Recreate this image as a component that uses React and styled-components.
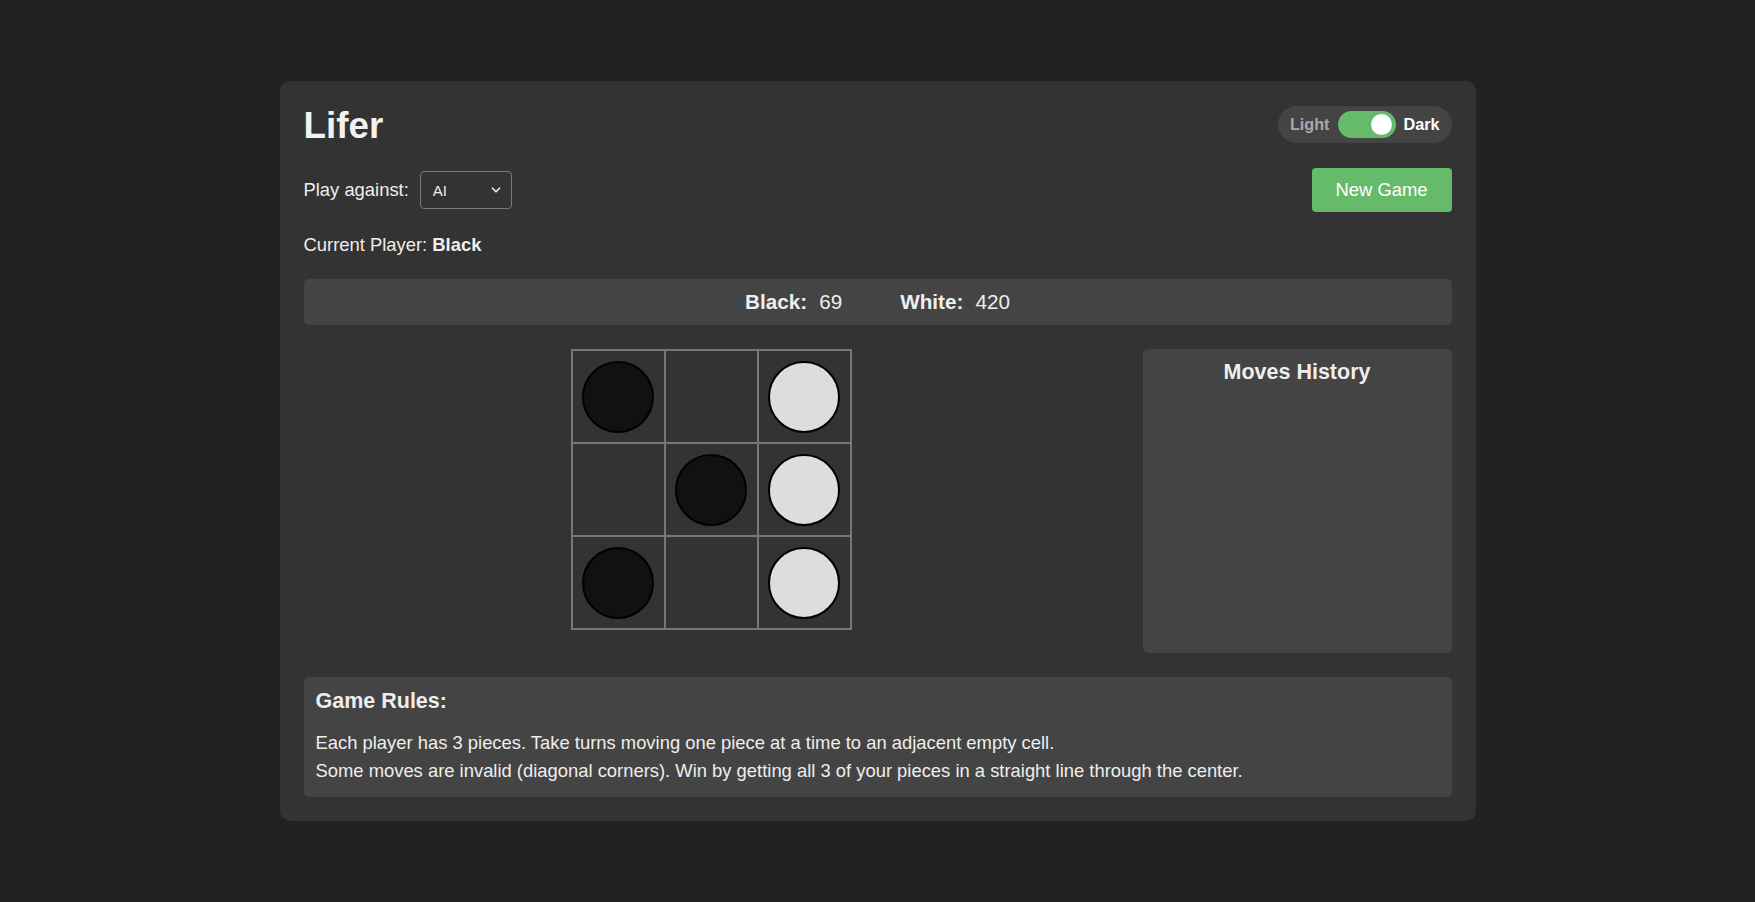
import styled, { createGlobalStyle } from 'styled-components';
import { ChevronDown } from 'lucide-react';

const GlobalStyle = createGlobalStyle`
  body {
    margin: 0;
    background: #222222;
    color: #eeeeee;
    font-family: "Liberation Sans", Arial, sans-serif;
    font-size: 18.4px;
  }
`;

const Page = styled.div`
  display: flex;
  justify-content: center;
  align-items: flex-start;
  padding-top: 81px;
  min-height: 100vh;
  box-sizing: border-box;
`;

const Card = styled.main`
  width: 1196px;
  box-sizing: border-box;
  padding: 24px;
  background: #333333;
  border-radius: 10px;
  display: flex;
  flex-direction: column;
`;

const Header = styled.header`
  display: flex;
  justify-content: space-between;
  align-items: center;
`;

const Title = styled.h1`
  margin: 0;
  font-size: 36.8px;
  line-height: 41px;
  font-weight: bold;
  color: #f2f2f2;
`;

const ThemeToggle = styled.div`
  display: flex;
  align-items: center;
  gap: 8px;
  margin-top: -3px;
  padding: 5px 12px;
  background: #444444;
  border-radius: 999px;
`;

const ToggleLabel = styled.span`
  font-size: 16.2px;
  font-weight: bold;
  color: ${(p) => (p.$active ? '#ffffff' : '#a9a9a9')};
`;

const Track = styled.div`
  position: relative;
  width: 58px;
  height: 27px;
  border-radius: 14px;
  background: #66bb6a;
`;

const Knob = styled.div`
  position: absolute;
  top: 3px;
  right: 4px;
  width: 21px;
  height: 21px;
  border-radius: 50%;
  background: #ffffff;
`;

const Controls = styled.div`
  margin-top: 22px;
  display: flex;
  justify-content: space-between;
  align-items: center;
`;

const OpponentPicker = styled.label`
  display: flex;
  align-items: center;
  gap: 11px;
`;

const SelectWrap = styled.div`
  position: relative;
  display: flex;
  color: #eeeeee;
  > svg {
    position: absolute;
    right: 9px;
    top: 50%;
    transform: translateY(-50%);
    pointer-events: none;
  }
`;

const Select = styled.select`
  appearance: none;
  width: 92px;
  height: 38px;
  padding: 0 12px;
  font-family: inherit;
  font-size: 15px;
  color: #eeeeee;
  background: #333333;
  border: 1px solid #7a7a7a;
  border-radius: 4px;
`;

const NewGameButton = styled.button`
  height: 44px;
  padding: 0 24px;
  border: none;
  border-radius: 4px;
  background: #66bb6a;
  color: #ffffff;
  font-family: inherit;
  font-size: 18.4px;
  cursor: pointer;
`;

const Status = styled.div`
  margin-top: 23px;
  line-height: 20px;
`;

const ScoreBar = styled.div`
  margin-top: 24px;
  height: 46px;
  display: flex;
  justify-content: center;
  align-items: center;
  gap: 58px;
  background: #444444;
  border-radius: 5px;
  font-size: 20.7px;
`;

const ScoreItem = styled.div`
  display: flex;
  gap: 12px;
  > b {
    font-weight: bold;
  }
`;

const Main = styled.section`
  margin-top: 24px;
  display: flex;
  gap: 24px;
  align-items: flex-start;
`;

const BoardArea = styled.div`
  flex: 1;
  display: flex;
  justify-content: center;
`;

const Board = styled.div`
  display: grid;
  grid-template-columns: repeat(3, 93px);
  grid-template-rows: repeat(3, 93px);
  border: 1px solid #777777;
`;

const Cell = styled.div`
  box-sizing: border-box;
  border: 1px solid #777777;
  background: #333333;
  display: flex;
  justify-content: center;
  align-items: center;
`;

const Piece = styled.div`
  box-sizing: border-box;
  width: 72px;
  height: 72px;
  border-radius: 50%;
  border: 2px solid #000000;
  background: ${(p) => (p.$color === 'black' ? '#111111' : '#dddddd')};
`;

const History = styled.aside`
  width: 309px;
  height: 304px;
  box-sizing: border-box;
  padding: 11px 10px;
  background: #444444;
  border-radius: 5px;
`;

const PanelTitle = styled.h3`
  margin: 0;
  font-size: 21.5px;
  line-height: 25px;
  font-weight: bold;
  text-align: ${(p) => p.$align || 'left'};
`;

const Rules = styled.section`
  margin-top: 24px;
  padding: 12px;
  background: #444444;
  border-radius: 5px;
  > h3 {
    margin-bottom: 15px;
  }
`;

const RulesText = styled.p`
  margin: 0;
  line-height: 28px;
`;

const board = [
  ['black', null, 'white'],
  [null, 'black', 'white'],
  ['black', null, 'white'],
];

export default function App() {
  return (
    <>
      <GlobalStyle />
      <Page>
        <Card>
          <Header>
            <Title>Lifer</Title>
            <ThemeToggle>
              <ToggleLabel>Light</ToggleLabel>
              <Track>
                <Knob />
              </Track>
              <ToggleLabel $active>Dark</ToggleLabel>
            </ThemeToggle>
          </Header>

          <Controls>
            <OpponentPicker>
              Play against:
              <SelectWrap>
                <Select defaultValue="ai">
                  <option value="ai">AI</option>
                  <option value="human">Human</option>
                </Select>
                <ChevronDown size={14} strokeWidth={3} />
              </SelectWrap>
            </OpponentPicker>
            <NewGameButton>New Game</NewGameButton>
          </Controls>

          <Status>
            Current Player: <b>Black</b>
          </Status>

          <ScoreBar>
            <ScoreItem>
              <b>Black:</b>
              <span>69</span>
            </ScoreItem>
            <ScoreItem>
              <b>White:</b>
              <span>420</span>
            </ScoreItem>
          </ScoreBar>

          <Main>
            <BoardArea>
              <Board>
                {board.flat().map((piece, i) => (
                  <Cell key={i}>{piece && <Piece $color={piece} />}</Cell>
                ))}
              </Board>
            </BoardArea>
            <History>
              <PanelTitle $align="center">Moves History</PanelTitle>
            </History>
          </Main>

          <Rules>
            <PanelTitle>Game Rules:</PanelTitle>
            <RulesText>
              Each player has 3 pieces. Take turns moving one piece at a time to an adjacent empty cell.
              <br />
              Some moves are invalid (diagonal corners). Win by getting all 3 of your pieces in a straight line through the center.
            </RulesText>
          </Rules>
        </Card>
      </Page>
    </>
  );
}
